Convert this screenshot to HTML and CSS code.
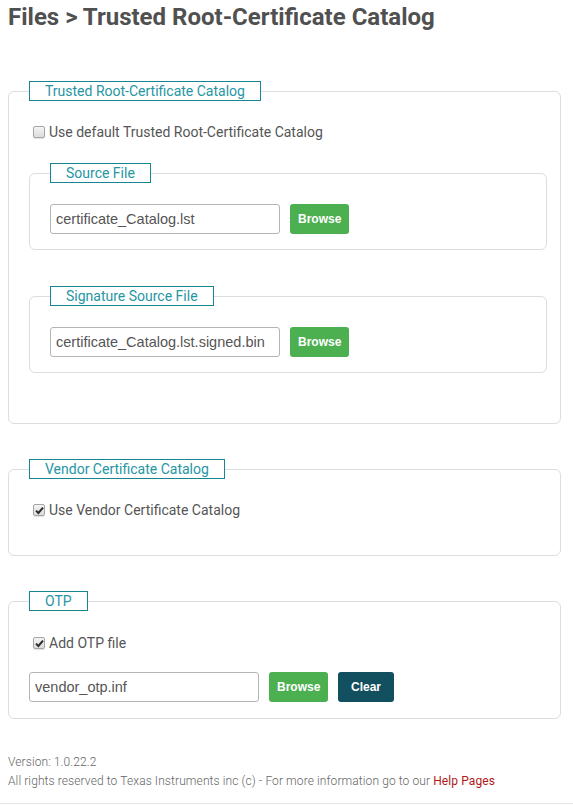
FILE: index.html
```html
<!DOCTYPE html>
<html lang="en">
<head>
	<meta charset="UTF-8">
	<title>Trusted Root-Certificate Catalog</title>
	<link rel="stylesheet" href="styles.css">
</head>
<body>
	<h1 class="title">Files &gt; Trusted Root-Certificate Catalog</h1>

	<fieldset class="group">
		<legend>Trusted Root-Certificate Catalog</legend>
		<label class="check">
			<span class="box"></span>Use default Trusted Root-Certificate Catalog
		</label>

		<fieldset class="group sub">
			<legend>Source File</legend>
			<div class="fileRow">
				<input class="path" type="text" value="certificate_Catalog.lst">
				<button class="btn browse">Browse</button>
			</div>
		</fieldset>

		<fieldset class="group sub second">
			<legend>Signature Source File</legend>
			<div class="fileRow">
				<input class="path" type="text" value="certificate_Catalog.lst.signed.bin">
				<button class="btn browse">Browse</button>
			</div>
		</fieldset>
	</fieldset>

	<fieldset class="group vendor">
		<legend>Vendor Certificate Catalog</legend>
		<label class="check">
			<span class="box on"><svg width="9" height="9" viewBox="0 0 9 9"><path d="M1 4.6 L3.4 7 L8 1.6" fill="none" stroke="#2b2b2b" stroke-width="2"/></svg></span>Use Vendor Certificate Catalog
		</label>
	</fieldset>

	<fieldset class="group otp">
		<legend>OTP</legend>
		<label class="check">
			<span class="box on"><svg width="9" height="9" viewBox="0 0 9 9"><path d="M1 4.6 L3.4 7 L8 1.6" fill="none" stroke="#2b2b2b" stroke-width="2"/></svg></span>Add OTP file
		</label>
		<div class="fileRow">
			<input class="path" type="text" value="vendor_otp.inf">
			<button class="btn browse">Browse</button>
			<button class="btn clear">Clear</button>
		</div>
	</fieldset>

	<div class="footer">
		<div>Version: 1.0.22.2</div>
		<div>All rights reserved to Texas Instruments inc (c) - For more information go to our <a href="#">Help Pages</a></div>
	</div>
	<div class="rule"></div>
</body>
</html>
```

FILE: styles.css
```css
body{margin:0;padding:0 8px;font-family:Roboto,"Liberation Sans",sans-serif;color:#555;background:#fff;}
.title{margin:3px 0 0;font-size:24px;line-height:28px;font-weight:700;color:#505050;}

.group{margin:50px 4px 0 0;padding:0 13px 50px 20px;border:1px solid #ddd;border-radius:6px;min-width:0;}
.group legend{margin:0;padding:0 15px;height:18px;line-height:18px;border:1px solid #17858f;font-size:14px;color:#2596a3;}
.group.sub{margin:22px 0 0;padding:0 0 15px 20px;}
.group.second{margin-top:36px;}
.group.vendor{margin-top:35px;padding-bottom:36px;}
.group.otp{margin-top:35px;padding-bottom:16px;}

.check{display:flex;align-items:center;margin-top:22px;height:18px;font-size:14px;color:#555;}
.otp .check{margin-top:23px;}
.check .box{display:flex;align-items:center;justify-content:center;box-sizing:border-box;width:12px;height:12px;margin:0 4px 0 4px;border:1px solid #a5a5a5;border-radius:2px;background:linear-gradient(#f4f4f4,#dcdcdc);box-shadow:0 1px 1px rgba(0,0,0,.12);}

.fileRow{display:flex;gap:10px;margin-top:21px;}
.otp .fileRow{margin-top:20px;}
.path{box-sizing:border-box;width:230px;height:30px;margin:0;padding:0 5px;border:1px solid #b4b4b4;border-radius:3px;font-family:"Liberation Sans",Arial,sans-serif;font-size:14.5px;color:#555;}
.btn{height:30px;margin:0;padding:0 8px;border:none;border-radius:3px;font-family:"Liberation Sans",Arial,sans-serif;font-size:12px;font-weight:700;color:#fff;}
.browse{width:59px;background:#4caf50;}
.clear{width:56px;background:#13505f;}

.footer{margin-top:34px;font-size:12px;line-height:19px;font-weight:300;color:#666;letter-spacing:.1px;}
.footer a{color:#b01818;text-decoration:none;font-weight:400;}
.rule{margin:12px -8px 0;border-top:1px solid #e6e6e6;}
```
